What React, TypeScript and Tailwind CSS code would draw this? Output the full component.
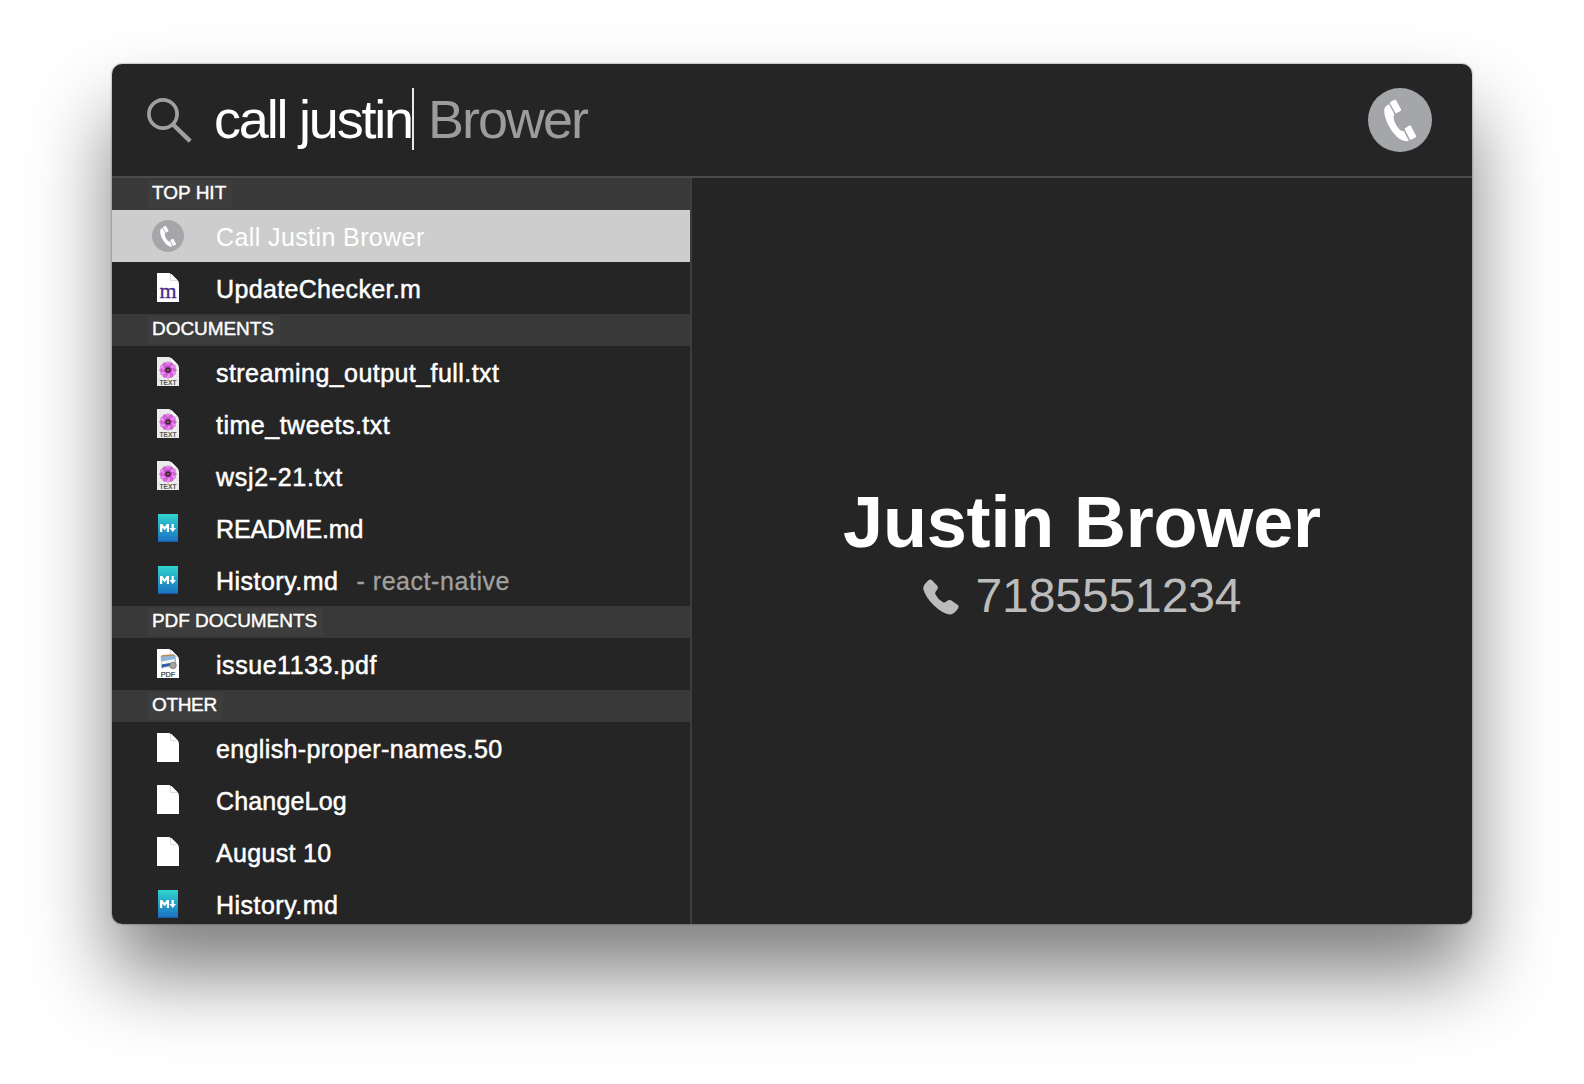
import React from 'react';

type Kind = 'phone' | 'm' | 'text' | 'md' | 'pdf' | 'blank';

function Handset() {
  return (
    <g fill="#fff">
      <path d="M21 16.200 C17.500 17.500 16 20 16.200 23.500 C16.800 32 22 42 29 48.800 C32 51.800 36.500 54 40.800 52.800 L36 43.200 C33 43.500 30.800 41 28.800 38 C26.200 34 24.800 30 26.200 26 Z" />
      <path d="M22 15.200 Q21.900 14.200 22.800 13.700 L26 11.900 Q27.400 11.300 28.200 12.400 L33 21.200 Q33.400 22.500 32.200 23.200 L27.600 25.400 Z" />
      <path d="M37 41.700 L36.700 40.500 L41.200 37.600 Q42.300 37.200 43 38.200 L48 47.800 Q48.300 49 47.200 49.700 L42.200 52 Z" />
    </g>
  );
}

function PhoneBadge({ className }: { className: string }) {
  return (
    <svg viewBox="0 0 64 64" className={className}>
      <circle cx="32" cy="32" r="32" fill="#a5a6aa" />
      <Handset />
    </svg>
  );
}

function Page({ children, fill = '#fff' }: { children?: React.ReactNode; fill?: string }) {
  return (
    <svg viewBox="0 0 32 32" className="size-8 overflow-visible">
      <path d="M5 1h12q3 .5 5 3.500l3 3q2 1.500 2 4.500v18H5z" fill={fill} />
      <path d="M18.500 2v6.500H25.500" fill="#fff" stroke="#cfcfcf" strokeWidth="0.700" />
      {children}
    </svg>
  );
}

function Icon({ kind }: { kind: Kind }) {
  if (kind === 'phone') return <PhoneBadge className="size-8" />;
  if (kind === 'm')
    return (
      <Page>
        <text x="16" y="25.800" textAnchor="middle" fontFamily="Liberation Serif, serif" fontSize="22" fill="#4b2c85" stroke="#4b2c85" strokeWidth="0.300">m</text>
      </Page>
    );
  if (kind === 'text')
    return (
      <Page fill="#ececec">
        {[0, 30, 60, 90, 120, 150, 180, 210, 240, 270, 300, 330].map((a) => (
          <ellipse key={a} cx="16" cy="9" rx="2.100" ry="3.400" fill={a % 60 ? '#d268d8' : '#ee92f2'} stroke="#b848be" strokeWidth="0.400" transform={`rotate(${a} 16 14)`} />
        ))}
        <circle cx="16" cy="14" r="3.600" fill="#a030a6" />
        <circle cx="16" cy="14" r="2.300" fill="#33212a" />
        <circle cx="16" cy="14" r="1" fill="#b58a4a" />
        <text x="16" y="29" textAnchor="middle" textLength="17" lengthAdjust="spacingAndGlyphs" fontFamily="Liberation Sans, sans-serif" fontWeight="700" fontSize="7" fill="#555">TEXT</text>
      </Page>
    );
  if (kind === 'pdf')
    return (
      <Page>
        <path d="M9 8l14-1 1 11-14 2z" fill="#8fb6dd" stroke="#999" strokeWidth="0.600" />
        <path d="M10 7.800l12-.8" stroke="#b88d58" strokeWidth="1.600" />
        <path d="M9.500 13.500l13-2.500v3.500l-13 2z" fill="#f4f4f0" />
        <path d="M9.800 16.500l12-2v4l-12 1.500z" fill="#2e5ba6" />
        <path d="M11 20l9-1.500" stroke="#eee" strokeWidth="1.500" />
        <circle cx="21" cy="17.500" r="3.200" fill="#a9a49a" stroke="#777" strokeWidth="0.800" />
        <text x="16" y="28.500" textAnchor="middle" textLength="14.500" lengthAdjust="spacingAndGlyphs" fontFamily="Liberation Sans, sans-serif" fontSize="7.500" fill="#333" stroke="#333" strokeWidth="0.200">PDF</text>
      </Page>
    );
  if (kind === 'md')
    return (
      <svg viewBox="0 0 32 32" className="size-8">
        <defs>
          <linearGradient id="md" x1="0" y1="0" x2="0" y2="1">
            <stop offset="0" stopColor="#30d4ce" />
            <stop offset="1" stopColor="#1b6ec2" />
          </linearGradient>
        </defs>
        <path d="M6 2h20v28H6z" fill="url(#md)" />
        <path d="M6 29.500h20" stroke="#1658a8" />
        <path d="M8 20v-8h2.200l2.300 3 2.300-3H17v8h-2.200v-4.600l-2.300 2.800-2.300-2.800V20z" fill="#fff" />
        <path d="M19.600 12h2.200v4h2.200l-3.300 4-3.300-4h2.200z" fill="#fff" />
      </svg>
    );
  return <Page />;
}

function Heading({ label, spacing }: { label: string; spacing: string }) {
  return (
    <div className="flex h-8 shrink-0 items-start bg-[#393939] pl-9">
      <span className={`mt-[2px] h-7 bg-[#3d3d3d] pr-1.5 pl-1 text-[19px] leading-[25px] text-white [-webkit-text-stroke:0.4px_white] ${spacing}`}>{label}</span>
    </div>
  );
}

function Row({ kind, label, spacing, note, selected }: { kind: Kind; label: string; spacing: string; note?: string; selected?: boolean }) {
  return (
    <div className={`flex h-[52px] shrink-0 items-start pl-10 ${selected ? 'w-[578px] bg-[#cdcdcd]' : ''}`}>
      <div className="mt-[10px] mr-8 size-8">
        <Icon kind={kind} />
      </div>
      <span className={`text-[25px] leading-[54px] text-white ${selected ? '' : '[-webkit-text-stroke:0.5px_white]'} ${spacing}`}>{label}</span>
      {note && <span className="ml-[18px] text-[25px] leading-[54px] tracking-[0.55px] text-[#a0a0a0] [-webkit-text-stroke:0.3px_#a0a0a0]">{note}</span>}
    </div>
  );
}

export default function App() {
  return (
    <div className="h-[1084px] w-[1584px] overflow-hidden bg-white px-28 pt-16 font-['Liberation_Sans',Arial,sans-serif] whitespace-nowrap">
      <div className="h-[860px] w-[1360px] rounded-[10px] shadow-[0_0_2px_rgba(0,0,0,0.6),0_50px_80px_rgba(0,0,0,0.5)]">
        <div className="flex h-full flex-col overflow-hidden rounded-[10px] bg-[#252525]">
          <header className="flex h-[114px] shrink-0 items-start border-b-2 border-[#4a4a4a] pl-[35px]">
            <svg viewBox="0 0 46 46" className="mt-[33px] size-[46px]" fill="none" stroke="#a0a0a0">
              <circle cx="16" cy="17" r="14.100" strokeWidth="3.700" />
              <path d="M26 27.500L43.200 44.200" strokeWidth="4.400" />
            </svg>
            <span className="ml-[21px] text-[54px] leading-[110px] tracking-[-2.2px] text-white">call justin</span>
            <span className="mt-6 h-[62px] w-[2px] bg-[#e8e8e8]" />
            <span className="ml-[14px] text-[54px] leading-[110px] tracking-[-2px] text-[#9c9c9c]">Brower</span>
            <PhoneBadge className="mt-6 mr-10 ml-auto size-16" />
          </header>
          <div className="flex min-h-0 flex-1">
            <section className="flex w-[580px] shrink-0 flex-col overflow-hidden border-r-2 border-[#3d3d3d]">
              <Heading label="TOP HIT" spacing="tracking-[0px]" />
              <Row kind="phone" label="Call Justin Brower" spacing="tracking-[0.4px]" selected />
              <Row kind="m" label="UpdateChecker.m" spacing="tracking-[0.34px]" />
              <Heading label="DOCUMENTS" spacing="tracking-[-0.06px]" />
              <Row kind="text" label="streaming_output_full.txt" spacing="tracking-[0.44px]" />
              <Row kind="text" label="time_tweets.txt" spacing="tracking-[0.5px]" />
              <Row kind="text" label="wsj2-21.txt" spacing="tracking-[0.68px]" />
              <Row kind="md" label="README.md" spacing="tracking-[-0.15px]" />
              <Row kind="md" label="History.md" spacing="tracking-[0.48px]" note="- react-native" />
              <Heading label="PDF DOCUMENTS" spacing="tracking-[-0.05px]" />
              <Row kind="pdf" label="issue1133.pdf" spacing="tracking-[0.55px]" />
              <Heading label="OTHER" spacing="tracking-[-0.35px]" />
              <Row kind="blank" label="english-proper-names.50" spacing="tracking-[0.37px]" />
              <Row kind="blank" label="ChangeLog" spacing="tracking-[0.17px]" />
              <Row kind="blank" label="August 10" spacing="tracking-[0.32px]" />
              <Row kind="md" label="History.md" spacing="tracking-[0.48px]" />
            </section>
            <section className="flex flex-1 flex-col items-center pt-[302px]">
              <h1 className="text-[72px] leading-[84px] font-bold tracking-[-0.17px] text-white">Justin Brower</h1>
              <div className="mt-1 flex h-14 items-center text-[#bcbcbc]">
                <svg viewBox="0 0 36 36" className="mt-[2px] mr-[17px] size-9" fill="currentColor">
                  <path d="M5.500 1.200 Q7.500-.4 9 1.200 L14.500 7 Q15.500 9.500 13.700 11.200 Q11.500 13.200 12.500 15.400 Q15 20.500 20 23.200 Q22.300 24 24 22.100 Q26 20.500 28 21.300 L34.800 26 Q36.400 27.700 35 29.500 Q31 35.500 26.500 35.600 Q19 34.200 11 26.500 Q2.500 18.500 .3 10 Q-.3 6.500 5.500 1.200z" />
                </svg>
                <span className="text-[48px] leading-[56px] tracking-[-0.1px]">7185551234</span>
              </div>
            </section>
          </div>
        </div>
      </div>
    </div>
  );
}
